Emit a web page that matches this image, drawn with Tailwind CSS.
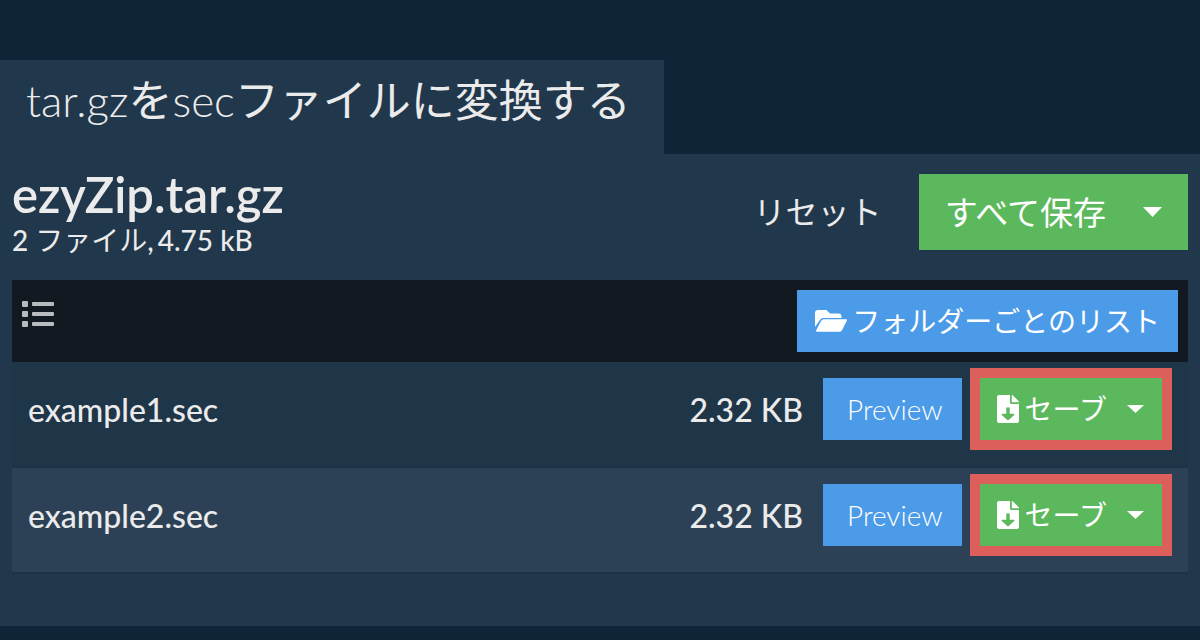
<!DOCTYPE html>
<html lang="ja">
  <head>
    <meta charset="UTF-8" />
    <meta name="viewport" content="width=device-width, initial-scale=1.0" />
    <title>tar.gzをsecファイルに変換する</title>
    <script src="https://cdn.jsdelivr.net/npm/@tailwindcss/browser@4"></script>
  </head>

  <body class="min-h-screen bg-[#0f2537] pt-[60px] font-['Lato','Noto_Sans_CJK_JP',sans-serif] text-[#ebebeb]">
    <h1 class="w-fit bg-[#20374c] pt-1.5 pr-[33px] pb-5 pl-[26px] text-[44px] leading-[68px] font-light">tar.gz<span class="font-normal">を</span>sec<span class="font-normal">ファイルに変換する</span></h1>

    <main class="bg-[#20374c] px-3 pt-5 pb-[52px]">
      <div class="flex h-[106px] items-start justify-between">
        <div>
          <h2 class="text-[49px] leading-10 font-semibold">ezyZip.tar.gz</h2>
          <p class="flex gap-1 text-[28px] leading-[52px] font-medium">
            <span>2 <span class="font-normal">ファイル</span>,</span>
            <span>4.75 kB</span>
          </p>
        </div>
        <div class="flex items-center">
          <button type="button" class="h-[76px] px-[37px] text-[32px] leading-[76px]">リセット</button>
          <div class="flex bg-[#5cb85c] text-white">
            <button type="button" class="h-[76px] pl-[26px] text-[33px] leading-[76px]">すべて保存</button>
            <button type="button" class="flex h-[76px] items-center pr-[26px] pl-[37px]" aria-label="保存メニュー">
              <svg class="h-[10px] w-[19px]" viewBox="0 0 19 10" fill="currentColor"><path d="M0 0h19l-9.500 10z" /></svg>
            </button>
          </div>
        </div>
      </div>

      <table class="w-full border-separate border-spacing-0 text-[32px]">
        <thead>
          <tr class="bg-[#121921]">
            <th class="h-[82px] pl-[10px] text-left align-top">
              <svg class="mt-[21px] h-[26px] w-8 text-[#b8bcbe]" viewBox="0 0 32 26" fill="currentColor">
                <rect width="6" height="6" rx="1" /><rect y="10" width="6" height="6" rx="1" /><rect y="20" width="6" height="6" rx="1" />
                <rect x="10" y="1" width="22" height="4" rx="1" /><rect x="10" y="11" width="22" height="4" rx="1" /><rect x="10" y="21" width="22" height="4" rx="1" />
              </svg>
            </th>
            <th colspan="2" class="p-[10px] font-normal">
              <button type="button" class="ml-auto flex h-[62px] items-center gap-[5px] bg-[#4c9be8] px-[18px] text-[28px] leading-[62px] text-white">
                <svg class="h-[22px] w-8" viewBox="0 0 32 22" fill="currentColor">
                  <path d="M0 17V3a3 3 0 0 1 3-3h7.500a3 3 0 0 1 2 1L15 3.500h8.500a3 3 0 0 1 3 3V8H8.500a4 4 0 0 0-3.600 2z" />
                  <path d="M6.200 10.700A3 3 0 0 1 8.800 9.200H31a1 1 0 0 1 .8 1.500L27 20.200a3 3 0 0 1-2.600 1.500H2a1 1 0 0 1-.8-1.500z" />
                </svg>
                <span>フォルダーごとのリスト</span>
              </button>
            </th>
          </tr>
        </thead>
        <tbody>
          <tr class="h-[106px] bg-[#1f3548] *:border-b-2 *:border-[#1e3244]">
            <td class="pt-[29px] pl-4 align-top leading-[38px] font-medium">example1.sec</td>
            <td class="pt-[29px] pr-5 text-right align-top leading-[38px] font-medium">2.32 KB</td>
            <td class="w-[365px] pt-[6px] align-top">
              <div class="flex items-center gap-2">
                <button type="button" class="h-[62px] bg-[#4c9be8] pr-[19px] pl-6 text-[28px] leading-[62px] font-light text-white">Preview</button>
                <div class="flex border-10 border-[#dc5f5c] bg-[#5cb85c] text-[28px] leading-[62px] text-white">
                  <button type="button" class="flex h-[62px] items-center gap-[6px] pl-[17px]">
                    <svg class="h-7 w-[22px]" viewBox="0 0 22 28" fill="currentColor">
                      <path fill-rule="evenodd" d="M2 0h11v7.500a1.500 1.500 0 0 0 1.500 1.500H22v17a2 2 0 0 1-2 2H2a2 2 0 0 1-2-2V2a2 2 0 0 1 2-2zm7.300 12.500v6.300H5.500c-.9 0-1.200.8-.7 1.300l5.500 5a1 1 0 0 0 1.400 0l5.500-5c.5-.5.2-1.300-.7-1.300h-3.800v-6.300z" />
                      <path d="M14.800 0c.5 0 .8.200 1.200.5l5.400 5.500c.4.400.6.700.6 1.200h-7.200z" />
                    </svg>
                    <span>セーブ</span>
                  </button>
                  <button type="button" class="flex h-[62px] items-center pr-[18px] pl-5" aria-label="保存オプション">
                    <svg class="h-2 w-[17px]" viewBox="0 0 17 8" fill="currentColor"><path d="M0 0h17l-8.500 8z" /></svg>
                  </button>
                </div>
              </div>
            </td>
          </tr>
          <tr class="h-[106px] bg-[#2c4156] *:border-b-2 *:border-[#1e3244]">
            <td class="pt-[29px] pl-4 align-top leading-[38px] font-medium">example2.sec</td>
            <td class="pt-[29px] pr-5 text-right align-top leading-[38px] font-medium">2.32 KB</td>
            <td class="w-[365px] pt-[6px] align-top">
              <div class="flex items-center gap-2">
                <button type="button" class="h-[62px] bg-[#4c9be8] pr-[19px] pl-6 text-[28px] leading-[62px] font-light text-white">Preview</button>
                <div class="flex border-10 border-[#dc5f5c] bg-[#5cb85c] text-[28px] leading-[62px] text-white">
                  <button type="button" class="flex h-[62px] items-center gap-[6px] pl-[17px]">
                    <svg class="h-7 w-[22px]" viewBox="0 0 22 28" fill="currentColor">
                      <path fill-rule="evenodd" d="M2 0h11v7.500a1.500 1.500 0 0 0 1.500 1.500H22v17a2 2 0 0 1-2 2H2a2 2 0 0 1-2-2V2a2 2 0 0 1 2-2zm7.300 12.500v6.300H5.500c-.9 0-1.200.8-.7 1.300l5.500 5a1 1 0 0 0 1.400 0l5.500-5c.5-.5.2-1.300-.7-1.300h-3.800v-6.300z" />
                      <path d="M14.800 0c.5 0 .8.200 1.200.5l5.400 5.500c.4.400.6.700.6 1.200h-7.200z" />
                    </svg>
                    <span>セーブ</span>
                  </button>
                  <button type="button" class="flex h-[62px] items-center pr-[18px] pl-5" aria-label="保存オプション">
                    <svg class="h-2 w-[17px]" viewBox="0 0 17 8" fill="currentColor"><path d="M0 0h17l-8.500 8z" /></svg>
                  </button>
                </div>
              </div>
            </td>
          </tr>
        </tbody>
      </table>
    </main>
  </body>
</html>
